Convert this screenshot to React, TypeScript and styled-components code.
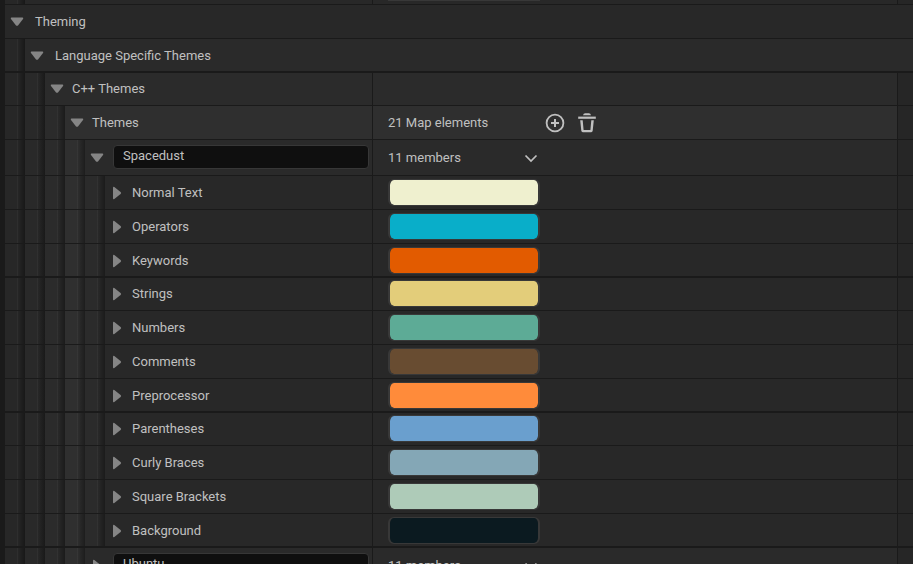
import React, { useState } from "react";
import styled, { createGlobalStyle, css } from "styled-components";

const GlobalStyle = createGlobalStyle`
  * { box-sizing: border-box; }
  html, body, #root { height: 100%; }
  body {
    margin: 0;
    overflow: hidden;
    background: #1a1a1a;
    color: #c0c0c0;
    font: 13px/18px Roboto, "Liberation Sans", sans-serif;
  }
  button, input { font: inherit; color: inherit; }
`;

type Seam = "thin" | "thick" | "after";

const Panel = styled.main`
  height: 100%;
  padding-left: 5px;
  overflow: hidden;
`;

const Row = styled.div<{ $height: number; $tone: string; $seam: Seam }>`
  display: flex;
  height: ${(p) => p.$height}px;
  border-bottom: ${(p) => (p.$seam === "thick" ? 2 : 1)}px solid #1a1a1a;
  background: ${(p) => p.$tone};
`;

const NameColumn = styled.div<{ $wide?: boolean }>`
  display: flex;
  flex: ${(p) => (p.$wide ? "1" : "0 0 368px")};
  min-width: 0;
  ${(p) => !p.$wide && css`border-right: 1px solid #1a1a1a;`}
`;

const Indent = styled.span<{ $tone: string }>`
  flex: 0 0 20px;
  background: linear-gradient(
    to right,
    transparent 0 12px,
    rgba(255, 255, 255, 0.03) 12px 13px,
    rgba(0, 0, 0, 0.04) 13px,
    rgba(0, 0, 0, 0.38) 20px
  ), ${(p) => p.$tone};
`;

const cell = css<{ $seam: Seam }>`
  display: flex;
  align-items: center;
  padding-top: ${(p) => (p.$seam === "thick" ? 1 : 0)}px;
  padding-bottom: ${(p) => (p.$seam === "after" ? 1 : 0)}px;
`;

const NameCell = styled.div<{ $seam: Seam }>`
  ${cell}
  flex: 1;
  min-width: 0;
  padding-right: 3px;
`;

const ValueCell = styled.div<{ $seam: Seam }>`
  ${cell}
  flex: 1;
  padding-left: 15px;
`;

const ResetCell = styled.div`
  flex: 0 0 16px;
  border-left: 1px solid #1a1a1a;
  background: #262626;
`;

const Expander = styled.button<{ $gap: number }>`
  display: flex;
  align-items: center;
  justify-content: center;
  flex: none;
  width: 14px;
  height: 14px;
  margin: 0 ${(p) => p.$gap}px 0 5px;
  padding: 0;
  border: 0;
  background: none;
  color: #858585;
`;

const Label = styled.span`
  white-space: nowrap;
`;

const KeyInput = styled.input`
  flex: 1;
  min-width: 0;
  height: 24px;
  margin-bottom: 1px;
  padding: 0 9px 3px;
  border: 1px solid #373737;
  border-radius: 4px;
  outline: 0;
  background: #0f0f0f;
`;

const Swatch = styled.button<{ $color: string }>`
  width: 152px;
  height: 27px;
  padding: 0;
  border: solid #383838;
  border-width: 1px 2px;
  border-radius: 6px;
  background: ${(p) => p.$color};
  background-clip: padding-box;
`;

const Summary = styled.span`
  width: 157px;
`;

const Members = styled.span`
  width: 136px;
`;

const IconButton = styled.button`
  display: flex;
  width: 32px;
  padding: 0;
  border: 0;
  background: none;
  color: #c0c0c0;
`;

const Field = styled.span`
  width: 152px;
  height: 1px;
  margin-top: -3px;
  background: #383838;
`;

function Arrow({ open, label, gap, onToggle }: { open: boolean; label: string; gap: number; onToggle?: () => void }) {
  return (
    <Expander $gap={gap} aria-expanded={open} aria-label={label} onClick={onToggle}>
      {open ? (
        <svg width="14" height="14" viewBox="0 0 14 14" fill="currentColor">
          <path d="M1.400 2.500h11.200q1.200.2.400 1.400L8 10.400q-1 .9-2 0L1 3.900Q.2 2.700 1.400 2.500Z" />
        </svg>
      ) : (
        <svg width="14" height="14" viewBox="0 0 14 14" fill="currentColor">
          <path d="M3 1.400q.2-1.200 1.300-.5l6.300 5.100q1 1 0 2l-6.300 5.100q-1.100.7-1.300-.5Z" />
        </svg>
      )}
    </Expander>
  );
}

const PlusIcon = () => (
  <svg width="20" height="20" viewBox="0 0 20 20" fill="none" stroke="currentColor" strokeWidth="1.8">
    <circle cx="10" cy="10" r="8.400" />
    <path d="M10 6v8M6 10h8" strokeWidth="2" />
  </svg>
);

const TrashIcon = () => (
  <svg width="20" height="20" viewBox="0 0 20 20" fill="currentColor">
    <path d="M6 2.200Q6.400.2 8.200.2h3.600q1.800 0 2.200 2Z" />
    <path d="M1.200 3.600h17.600v2.200H1.200Z" />
    <path d="M3.200 7.200h2.500l.9 9.800h6.800l.9-9.800h2.500l-1.100 10.600q-.2 1.400-1.500 1.400H5.800q-1.300 0-1.500-1.400Z" />
  </svg>
);

const ChevronIcon = () => (
  <svg width="14" height="14" viewBox="0 0 14 14" fill="none" stroke="currentColor" strokeWidth="1.7">
    <path d="M1.500 4.500 7 10l5.500-5.500" />
  </svg>
);

const SHADES = ["#272727", "#292929", "#2b2b2b", "#2f2f2f", "#2b2b2b"];

const Indents = ({ depth }: { depth: number }) => (
  <>
    {SHADES.slice(0, depth).map((tone, i) => (
      <Indent key={i} $tone={tone} />
    ))}
  </>
);

interface ColorEntry {
  name: string;
  color: string;
  seam: Seam;
}

const COLORS: ColorEntry[] = [
  { name: "Normal Text", color: "#eff0cf", seam: "thin" },
  { name: "Operators", color: "#09aec9", seam: "thin" },
  { name: "Keywords", color: "#e25b00", seam: "thick" },
  { name: "Strings", color: "#e3cd7a", seam: "after" },
  { name: "Numbers", color: "#5dab96", seam: "thin" },
  { name: "Comments", color: "#684c31", seam: "thin" },
  { name: "Preprocessor", color: "#ff8b3a", seam: "thick" },
  { name: "Parentheses", color: "#6a9fce", seam: "after" },
  { name: "Curly Braces", color: "#84a7b6", seam: "thin" },
  { name: "Square Brackets", color: "#aecbb8", seam: "thin" },
  { name: "Background", color: "#0b1a20", seam: "thick" },
];

function ColorRow({ name, color, seam }: ColorEntry) {
  return (
    <Row $height={seam === "after" ? 33 : 34} $tone="#282828" $seam={seam}>
      <NameColumn>
        <Indents depth={5} />
        <NameCell $seam={seam}>
          <Arrow open={false} label={`Expand ${name}`} gap={8} />
          <Label>{name}</Label>
        </NameCell>
      </NameColumn>
      <ValueCell $seam={seam}>
        <Swatch $color={color} aria-label={`${name} color`} />
      </ValueCell>
      <ResetCell />
    </Row>
  );
}

function ThemeRow({ initial, open, onToggle }: { initial: string; open: boolean; onToggle?: () => void }) {
  const [name, setName] = useState(initial);
  return (
    <Row $height={36} $tone="#2a2a2a" $seam="thin">
      <NameColumn>
        <Indents depth={4} />
        <NameCell $seam="thin">
          <Arrow open={open} label={`Toggle ${initial}`} gap={9} onToggle={onToggle} />
          <KeyInput aria-label="Theme name" value={name} onChange={(e) => setName(e.target.value)} />
        </NameCell>
      </NameColumn>
      <ValueCell $seam="thin">
        <Members>11 members</Members>
        <IconButton aria-label="Element options">
          <ChevronIcon />
        </IconButton>
      </ValueCell>
      <ResetCell />
    </Row>
  );
}

export default function App() {
  const [open, setOpen] = useState(true);
  return (
    <>
      <GlobalStyle />
      <Panel>
        <Row $height={5} $tone="#282828" $seam="thin">
          <NameColumn>
            <Indents depth={1} />
          </NameColumn>
          <ValueCell $seam="thin">
            <Field />
          </ValueCell>
          <ResetCell />
        </Row>
        <Row $height={34} $tone="#282828" $seam="thin">
          <NameColumn $wide>
            <NameCell $seam="thin">
              <Arrow open label="Toggle Theming" gap={11} />
              <Label>Theming</Label>
            </NameCell>
          </NameColumn>
        </Row>
        <Row $height={34} $tone="#2a2a2a" $seam="thick">
          <NameColumn $wide>
            <Indents depth={1} />
            <NameCell $seam="thick">
              <Arrow open label="Toggle Language Specific Themes" gap={11} />
              <Label>Language Specific Themes</Label>
            </NameCell>
          </NameColumn>
        </Row>
        <Row $height={33} $tone="#2b2b2b" $seam="after">
          <NameColumn>
            <Indents depth={2} />
            <NameCell $seam="after">
              <Arrow open label="Toggle C++ Themes" gap={8} />
              <Label>C++ Themes</Label>
            </NameCell>
          </NameColumn>
          <ValueCell $seam="after" />
          <ResetCell />
        </Row>
        <Row $height={34} $tone="#2f2f2f" $seam="thin">
          <NameColumn>
            <Indents depth={3} />
            <NameCell $seam="thin">
              <Arrow open label="Toggle Themes" gap={8} />
              <Label>Themes</Label>
            </NameCell>
          </NameColumn>
          <ValueCell $seam="thin">
            <Summary>21 Map elements</Summary>
            <IconButton aria-label="Add element">
              <PlusIcon />
            </IconButton>
            <IconButton aria-label="Delete all elements">
              <TrashIcon />
            </IconButton>
          </ValueCell>
          <ResetCell />
        </Row>
        <ThemeRow initial="Spacedust" open={open} onToggle={() => setOpen(!open)} />
        {open && COLORS.map((entry) => <ColorRow key={entry.name} {...entry} />)}
        <ThemeRow initial="Ubuntu" open={false} />
      </Panel>
    </>
  );
}
